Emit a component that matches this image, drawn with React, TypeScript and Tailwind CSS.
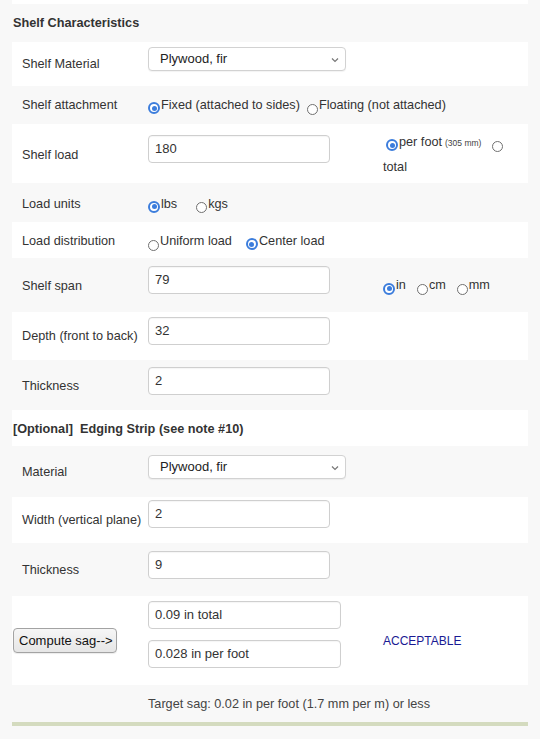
import React from "react";

function Radio({ on, className = "" }: { on?: boolean; className?: string }) {
  if (on) {
    return (
      <span
        className={`inline-flex items-center justify-center w-[12px] h-[12px] rounded-full border-[2px] border-[#3c7ddc] bg-white translate-y-[2px] shrink-0 ${className}`}
      >
        <span className="w-[5px] h-[5px] rounded-full bg-[#3c7ddc]" />
      </span>
    );
  }
  return (
    <span
      className={`inline-block w-[11px] h-[11px] rounded-full border border-[#707070] bg-white translate-y-[3px] shrink-0 ${className}`}
    />
  );
}

function TextBox({ value, w = "w-[182px]" }: { value: string; w?: string }) {
  return (
    <div
      className={`${w} h-[28px] bg-white border border-[#cfcfcf] rounded-[4px] shadow-[inset_0_1px_1px_rgba(0,0,0,0.04)] flex items-center pl-[6px] text-[13px] text-[#333]`}
    >
      {value}
    </div>
  );
}

function SelectBox() {
  return (
    <div className="w-[198px] h-[24px] bg-white border border-[#d2d2d2] rounded-[4px] shadow-[0_1px_1px_rgba(0,0,0,0.05)] flex items-center justify-between pl-[11px] pr-[6px] text-[13px] text-[#222]">
      <span>Plywood, fir</span>
      <svg width="8" height="6" viewBox="0 0 8 6" className="mt-[1px]">
        <path d="M1 1.5 L4 4.5 L7 1.5" fill="none" stroke="#777" strokeWidth="1.2" />
      </svg>
    </div>
  );
}

function Label({ children }: { children: React.ReactNode }) {
  return (
    <div className="w-[136px] shrink-0 pl-[10px] pt-[2px] flex items-center text-[12.7px] text-[#333]">
      {children}
    </div>
  );
}

export default function App() {
  return (
    <div className="w-[540px] h-[739px] bg-[#f8f8f8] font-['Liberation_Sans',Arial,Helvetica,sans-serif] text-[#333] overflow-hidden">
      <div className="mx-[12px] flex flex-col">
        <div className="h-[4px] bg-white" />
        {/* Header */}
        <div className="h-[38px] flex items-center pl-[1px] pt-[1px] text-[12.7px] font-bold text-[#333]">
          Shelf Characteristics
        </div>

        {/* Shelf Material */}
        <div className="h-[44px] bg-white flex">
          <Label>
            <span>Shelf Material</span>
          </Label>
          <div className="pt-[5px]">
            <SelectBox />
          </div>
        </div>

        {/* Shelf attachment */}
        <div className="h-[38px] flex">
          <Label>Shelf attachment</Label>
          <div className="flex items-center pt-[2px] text-[12.7px]">
            <Radio on />
            <span className="ml-[1px]">Fixed (attached to sides)</span>
            <Radio className="ml-[7px]" />
            <span className="ml-[1px]">Floating (not attached)</span>
          </div>
        </div>

        {/* Shelf load */}
        <div className="h-[59px] bg-white flex">
          <Label>
            <span className="mt-[2px]">Shelf load</span>
          </Label>
          <div className="pt-[11px] w-[235px]">
            <TextBox value="180" />
          </div>
          <div className="flex flex-col pt-[11px] text-[12.7px]">
            <div className="flex items-center h-[16px]">
              <Radio on className="ml-[3px]" />
              <span className="ml-[1px]">per foot</span>
              <span className="ml-[3px] text-[8.5px] text-[#444] mt-[1px]">(305 mm)</span>
              <Radio className="ml-[11px]" />
            </div>
            <div className="h-[16px] mt-[9px] flex items-center">total</div>
          </div>
        </div>

        {/* Load units */}
        <div className="h-[39px] flex">
          <Label>
            <span className="mt-[2px]">Load units</span>
          </Label>
          <div className="flex items-center pt-[4px] text-[12.7px]">
            <Radio on />
            <span className="ml-[1px]">lbs</span>
            <Radio className="ml-[19px]" />
            <span className="ml-[1px]">kgs</span>
          </div>
        </div>

        {/* Load distribution */}
        <div className="h-[36px] bg-white flex">
          <Label>
            <span className="mt-[2px]">Load distribution</span>
          </Label>
          <div className="flex items-center pt-[4px] text-[12.7px]">
            <Radio />
            <span className="ml-[1px]">Uniform load</span>
            <Radio on className="ml-[14px]" />
            <span className="ml-[1px]">Center load</span>
          </div>
        </div>

        {/* Shelf span */}
        <div className="h-[54px] flex">
          <Label>
            <span className="mt-[1px]">Shelf span</span>
          </Label>
          <div className="pt-[8px] w-[235px]">
            <TextBox value="79" />
          </div>
          <div className="flex items-center text-[12.7px] pt-[3px]">
            <Radio on />
            <span className="ml-[1px] -translate-y-[1px]">in</span>
            <Radio className="ml-[11px]" />
            <span className="ml-[1px] -translate-y-[1px]">cm</span>
            <Radio className="ml-[11px]" />
            <span className="ml-[1px] -translate-y-[1px]">mm</span>
          </div>
        </div>

        {/* Depth */}
        <div className="h-[48px] bg-white flex">
          <Label>
            <span>Depth (front to back)</span>
          </Label>
          <div className="pt-[5px]">
            <TextBox value="32" />
          </div>
        </div>

        {/* Thickness */}
        <div className="h-[50px] flex">
          <Label>
            <span className="mt-[1px]">Thickness</span>
          </Label>
          <div className="pt-[7px]">
            <TextBox value="2" />
          </div>
        </div>

        {/* Edging header */}
        <div className="h-[36px] bg-white flex items-center pl-[1px] pt-[3px] text-[12.7px] font-bold text-[#333]">
          [Optional]&nbsp;&nbsp;Edging Strip (see note #10)
        </div>

        {/* Material */}
        <div className="h-[51px] flex">
          <Label>
            <span className="mt-[1px]">Material</span>
          </Label>
          <div className="pt-[9px]">
            <SelectBox />
          </div>
        </div>

        {/* Width */}
        <div className="h-[46px] bg-white flex">
          <Label>
            <span>Width (vertical plane)</span>
          </Label>
          <div className="pt-[3px]">
            <TextBox value="2" />
          </div>
        </div>

        {/* Thickness */}
        <div className="h-[53px] flex">
          <Label>
            <span className="mt-[1px]">Thickness</span>
          </Label>
          <div className="pt-[8px]">
            <TextBox value="9" />
          </div>
        </div>

        {/* Compute */}
        <div className="h-[89px] bg-white flex">
          <div className="w-[136px] shrink-0 pt-[32px] pl-[1px]">
            <button className="w-[104px] h-[25px] rounded-[4px] border border-[#a3a3a3] bg-gradient-to-b from-[#f6f6f6] to-[#e6e6e6] text-[13px] text-[#111] text-left pl-[5px] shadow-[0_1px_1px_rgba(0,0,0,0.08)]">
              Compute sag--&gt;
            </button>
          </div>
          <div className="pt-[5px] flex flex-col gap-[11px] w-[235px]">
            <TextBox value="0.09 in total" w="w-[193px]" />
            <TextBox value="0.028 in per foot" w="w-[193px]" />
          </div>
          <div className="flex items-center text-[12px] text-[#1a1a93] mt-[1px]">
            ACCEPTABLE
          </div>
        </div>

        {/* Target */}
        <div className="h-[37px] flex">
          <div className="w-[136px] shrink-0" />
          <div className="flex items-center pt-[3px] text-[12.7px] text-[#444]">
            Target sag: 0.02 in per foot (1.7 mm per m) or less
          </div>
        </div>

        <div className="h-[4px] bg-[#d4dbbf]" />
      </div>
    </div>
  );
}
